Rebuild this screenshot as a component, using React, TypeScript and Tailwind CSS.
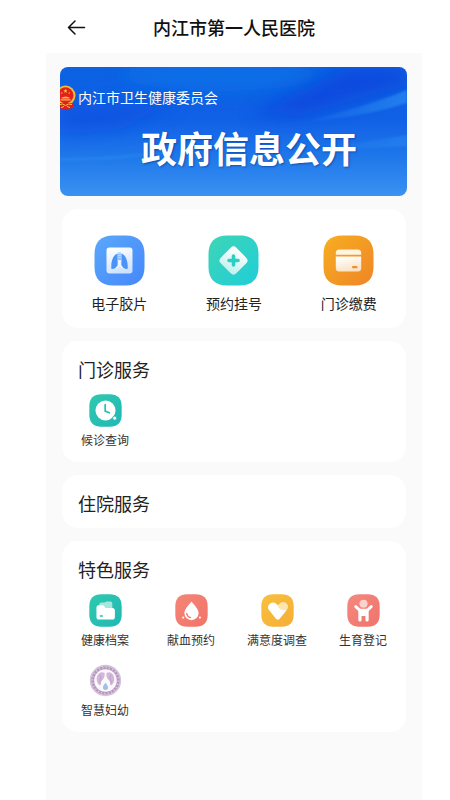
import type { ReactNode } from 'react';

const fontStack = "font-['Noto_Sans_CJK_SC',sans-serif]";

function BannerBackdrop() {
  return (
    <svg className="absolute inset-0 h-full w-full" viewBox="0 0 347 129" preserveAspectRatio="none" aria-hidden="true">
      <defs>
        <linearGradient id="sky" x1="0" y1="0" x2="0" y2="1">
          <stop offset="0" stopColor="#0b62e2" />
          <stop offset="0.4" stopColor="#1160e6" />
          <stop offset="0.7" stopColor="#1f78ea" />
          <stop offset="1" stopColor="#3a92f2" />
        </linearGradient>
        <linearGradient id="ray" x1="0" y1="0" x2="1" y2="0">
          <stop offset="0" stopColor="#2b8cf2" stopOpacity="0" />
          <stop offset="1" stopColor="#2b8cf2" stopOpacity="0.7" />
        </linearGradient>
        <filter id="soft" x="-30%" y="-60%" width="160%" height="220%">
          <feGaussianBlur stdDeviation="9" />
        </filter>
        <filter id="edge">
          <feGaussianBlur stdDeviation="1" />
        </filter>
      </defs>
      <rect width="347" height="129" fill="url(#sky)" />
      <ellipse cx="160" cy="8" rx="100" ry="16" fill="#0a72e8" opacity="0.8" filter="url(#soft)" />
      <path d="M190 48L290 0H347V18L240 48Z" fill="#0a3fdc" opacity="0.7" filter="url(#soft)" />
      <path d="M0 40L120 34L60 62L0 66Z" fill="#0f50e0" opacity="0.7" filter="url(#soft)" />
      <path d="M236 56Q300 42 347 23V36Q300 51 236 56Z" fill="url(#ray)" filter="url(#edge)" />
      <path d="M250 82Q300 76 347 68V79Q300 82 250 84Z" fill="url(#ray)" opacity="0.7" filter="url(#edge)" />
      <path d="M0 91Q60 90 120 83Q60 95 0 94Z" fill="#2b8cf2" opacity="0.5" filter="url(#edge)" />
    </svg>
  );
}

function Emblem() {
  return (
    <svg className="h-6 w-4 shrink-0" viewBox="0 0 16 24" aria-hidden="true">
      <circle cx="5.500" cy="10.500" r="10" fill="#f6b93c" />
      <path d="M-1 18H13V23L8 24H2L-1 23Z" fill="#dc1f1c" />
      <circle cx="5.500" cy="10.300" r="8" fill="#e3211c" />
      <path d="M5.500 4l.6 1.300 1.400.1-1.100.9.4 1.400-1.300-.8-1.300.8.4-1.400-1.100-.9 1.400-.1z" fill="#fbc84b" />
      <circle cx="1.800" cy="8" r=".7" fill="#fbc84b" />
      <circle cx="9.200" cy="8" r=".7" fill="#fbc84b" />
      <path d="M1.500 13.500H9.500V12.500L5.500 11.500 1.500 12.500ZM.5 14.200H10.500V15.500H.5Z" fill="#fbb84b" />
      <path d="M0 19.500Q2.500 18 5.500 20.500Q8.500 18 12 19.500M1 22.500L4 21.500M10 22.500L7 21.500" fill="none" stroke="#fbc84b" strokeWidth="1" />
    </svg>
  );
}

function Tile({ id, from, to, size, children }: { id: string; from: string; to: string; size: string; children: ReactNode }) {
  return (
    <svg className={size} viewBox="0 0 51 51" aria-hidden="true">
      <defs>
        <linearGradient id={id} x1="0" y1="0" x2="1" y2="1">
          <stop offset="0" stopColor={from} />
          <stop offset="1" stopColor={to} />
        </linearGradient>
        <linearGradient id={`${id}-face`} x1="0.2" y1="0" x2="0.5" y2="1">
          <stop offset="0" stopColor="#fff" />
          <stop offset="1" stopColor="#fff" stopOpacity="0.72" />
        </linearGradient>
      </defs>
      <path
        d="M19 .5H32C44 .5 50.500 7 50.500 19V32C50.500 44 44 50.500 32 50.500H19C7 50.500 .5 44 .5 32V19C.5 7 7 .5 19 .5Z"
        fill={`url(#${id})`}
      />
      {children}
    </svg>
  );
}

const big = 'size-[51px]';
const small = 'size-[33px]';

const filmIcon = (
  <Tile id="film" from="#5aa8fb" to="#4587fa" size={big}>
    <rect x="12.500" y="12.500" width="26" height="26" rx="3" fill="url(#film-face)" />
    <path
      d="M23.600 18.500C20 19.500 17.300 25 17.300 30.500V33.800C19.500 34.300 22.200 33 23.600 30.500ZM27.400 18.500C31 19.500 33.700 25 33.700 30.500V33.800C31.500 34.300 28.800 33 27.400 30.500Z"
      fill="#4c93f8"
    />
    <path d="M25.500 17.500V25" stroke="#8fbdfb" strokeWidth="3" />
    <path d="M25.500 25V30.500M25.500 29.500L22.500 33M25.500 29.500L28.500 33" fill="none" stroke="#f1f6ff" strokeWidth="1.500" />
    <path d="M24 18.500H27M24 20.500H27M24 22.500H27" stroke="#dbe9fe" strokeWidth=".6" />
  </Tile>
);

const bookingIcon = (
  <Tile id="booking" from="#3dd6b6" to="#20cdd8" size={big}>
    <rect x="14.500" y="14.500" width="22" height="22" rx="4" fill="url(#booking-face)" transform="rotate(45 25.500 25.500)" />
    <path d="M25.500 21V30M21 25.500H30" stroke="#2bcfc4" strokeWidth="3.600" strokeLinecap="round" />
  </Tile>
);

const payIcon = (
  <Tile id="pay" from="#f7ae20" to="#ef8528" size={big}>
    <path d="M12.800 19.800V18Q12.800 14.500 16.300 14.500H34.700Q38.200 14.500 38.200 18V19.800Z" fill="#fff4e2" />
    <path d="M12.800 21.500H38.200V33Q38.200 36.500 34.700 36.500H16.300Q12.800 36.500 12.800 33Z" fill="url(#pay-face)" />
    <rect x="29" y="31" width="5.500" height="2.200" rx="1" fill="#ef9030" />
  </Tile>
);

const waitingIcon = (
  <Tile id="waiting" from="#2fc9ae" to="#20b8b5" size={small}>
    <circle cx="25.500" cy="25.500" r="15.500" fill="#fff" />
    <path d="M25 16.500V26.500L31.500 29" fill="none" stroke="#27c0af" strokeWidth="2.600" strokeLinecap="round" strokeLinejoin="round" />
    <circle cx="39.800" cy="37.300" r="3.200" fill="#fff" stroke="#24bdb2" strokeWidth="1.500" />
  </Tile>
);

const recordIcon = (
  <Tile id="record" from="#2fc9ae" to="#20b8b5" size={small}>
    <path d="M16 23V16Q16 13 19 13H24L27 11.500H33Q36 11.500 36 14.500V24H16Z" fill="#a6e7dd" />
    <path
      d="M11.500 21Q11.500 17.500 15 17.500H21Q23 17.500 24 19.500L25 21.500H36Q40 21.500 40 25.500V35Q40 39.500 36 39.500H15.500Q11.500 39.500 11.500 35Z"
      fill="#fff"
    />
    <path d="M17.500 34H20.500" stroke="#24bdb2" strokeWidth="2.200" strokeLinecap="round" />
  </Tile>
);

const bloodIcon = (
  <Tile id="blood" from="#f48578" to="#f17468" size={small}>
    <path d="M25.500 11.500C30 17 36.500 24 36.500 29.500A11 11 0 0 1 14.500 29.500C14.500 24 21 17 25.500 11.500Z" fill="#fff" />
    <path d="M18 30Q19 35.500 24 36.500" fill="none" stroke="#f27a6e" strokeWidth="2" strokeLinecap="round" />
    <circle cx="12.700" cy="36.500" r="1.700" fill="#fff" />
    <circle cx="38.500" cy="36.500" r="1.700" fill="#fff" />
  </Tile>
);

const surveyIcon = (
  <Tile id="survey" from="#f9c03c" to="#f5ad38" size={small}>
    <path d="M25.500 18L29 14.500A7.200 7.200 0 0 1 39.500 25L33 31.500Z" fill="#fde5b0" />
    <path
      d="M26 17.500L23 14.800C17 9.800 7.500 17.500 12 24.500L23.500 38.500Q26 41 28.500 38.500L36.500 29Q39 26.500 38.500 24.500Q28 26.500 26 17.500Z"
      fill="#fff"
    />
  </Tile>
);

const birthIcon = (
  <Tile id="birth" from="#f4897f" to="#f0736b" size={small}>
    <circle cx="25.500" cy="15" r="6.300" fill="#fcd2cc" />
    <path
      d="M13.500 19.500L19.500 25H31.500L37.500 19.500"
      fill="none"
      stroke="#fff"
      strokeWidth="4.500"
      strokeLinecap="round"
      strokeLinejoin="round"
    />
    <path d="M17.500 23.500H33.500V40Q33.500 42.500 31 42.500Q28.500 42.500 28.500 40V34H22.500V40Q22.500 42.500 20 42.500Q17.500 42.500 17.500 40Z" fill="#fff" />
  </Tile>
);

const familyIcon = (
  <svg className={small} viewBox="0 0 51 51" aria-hidden="true">
    <circle cx="25.500" cy="25.500" r="23" fill="#b795c2" stroke="#d3c6d6" strokeWidth="2.500" />
    <circle cx="25.500" cy="25.500" r="20" fill="none" stroke="#decbe3" strokeWidth="2.500" strokeDasharray="2 3.200" />
    <circle cx="25.500" cy="25.500" r="17.500" fill="#fbf8fc" />
    <path d="M24 14C17 9.500 11 17 12 25C12.500 29 15 32 17 33C20 32 17 28 20 25.500C23 23 25 19 24 14Z" fill="#d3b6d8" />
    <path d="M27 14C34 9.500 40 17 39 25C38.500 29 36 32 34 33C31 32 34 28 31 25.500C28 23 26 19 27 14Z" fill="#d3b6d8" />
    <path d="M17 17Q20.500 20 16 29M34 17Q30.500 20 35 29" fill="none" stroke="#b9a0c8" strokeWidth="1.500" />
    <path d="M25.500 29C27.500 32 29.500 34 29.500 36A4 4 0 0 1 21.500 36C21.500 34 23.500 32 25.500 29Z" fill="#9cc3e2" />
  </svg>
);

type Item = { label: string; icon: ReactNode };

const quickItems: Item[] = [
  { label: '电子胶片', icon: filmIcon },
  { label: '预约挂号', icon: bookingIcon },
  { label: '门诊缴费', icon: payIcon },
];

const sections: { title: string; items: Item[] }[] = [
  { title: '门诊服务', items: [{ label: '候诊查询', icon: waitingIcon }] },
  { title: '住院服务', items: [] },
  {
    title: '特色服务',
    items: [
      { label: '健康档案', icon: recordIcon },
      { label: '献血预约', icon: bloodIcon },
      { label: '满意度调查', icon: surveyIcon },
      { label: '生育登记', icon: birthIcon },
      { label: '智慧妇幼', icon: familyIcon },
    ],
  },
];

function Section({ title, items }: { title: string; items: Item[] }) {
  return (
    <section className="rounded-2xl bg-white pt-[14px]">
      <h2 className="pb-[11px] pl-4 text-lg leading-7 text-[#222]">{title}</h2>
      {items.length > 0 && (
        <div className="grid grid-cols-4 gap-y-[15px] pb-[13px]">
          {items.map((item) => (
            <button key={item.label} type="button" className="flex flex-col items-center gap-1 text-xs leading-[18px] whitespace-nowrap text-[#333]">
              {item.icon}
              {item.label}
            </button>
          ))}
        </div>
      )}
    </section>
  );
}

export default function App() {
  return (
    <div className={`min-h-screen bg-white pr-7 pl-[46px] ${fontStack}`}>
      <div className="flex min-h-screen flex-col">
        <header className="grid h-[53px] grid-cols-[60px_1fr_60px] items-center pt-1">
          <button type="button" aria-label="返回" className="pl-[21px]">
            <svg className="size-[19px]" viewBox="0 0 19 19" fill="none" stroke="#111" strokeWidth="1.500" strokeLinecap="round" strokeLinejoin="round">
              <path d="M17.500 8.500H1.500M8 2L1.500 8.500L8 15" />
            </svg>
          </button>
          <h1 className="pb-[3px] text-center text-lg font-medium text-[#111]">内江市第一人民医院</h1>
        </header>
        <main className="flex flex-1 flex-col gap-[13px] bg-[#fafafa] pt-[14px] pr-4 pb-8 pl-4">
          <a href="#info" className="relative -mr-px -ml-0.5 block overflow-hidden rounded-lg pt-[18px] pb-[27px] text-white">
            <BannerBackdrop />
            <div className="relative flex items-center gap-0.5 text-sm leading-6">
              <Emblem />
              <span>内江市卫生健康委员会</span>
            </div>
            <div className="relative mt-4 pl-[81px] text-4xl leading-[44px] font-bold whitespace-nowrap [text-shadow:1px_1px_2px_rgba(10,50,140,0.6)]">
              政府信息公开
            </div>
          </a>
          <nav className="grid grid-cols-3 rounded-2xl bg-white pt-[26px] pb-[15px]">
            {quickItems.map((item) => (
              <button key={item.label} type="button" className="flex flex-col items-center gap-[7px] text-sm leading-5 text-[#222]">
                {item.icon}
                {item.label}
              </button>
            ))}
          </nav>
          {sections.map((section) => (
            <Section key={section.title} title={section.title} items={section.items} />
          ))}
        </main>
      </div>
    </div>
  );
}
